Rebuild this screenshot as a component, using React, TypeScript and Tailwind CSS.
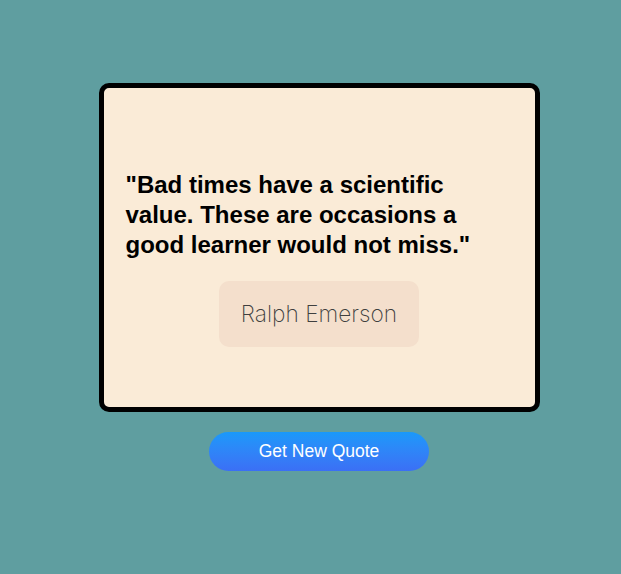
export default function App() {
  return (
    <div className="min-h-[574px] w-full bg-[#5f9ea0] flex flex-col items-center pt-[83px] pl-[17px]">
      <div className="w-[441px] h-[329px] border-[5px] border-black rounded-[10px] bg-[#faebd7] pt-[82px] px-[22px] flex flex-col items-center">
        <p
          className="self-stretch text-[24px] leading-[30px] font-bold text-black"
          style={{ fontFamily: '"Liberation Sans", Arial, sans-serif' }}
        >
          "Bad times have a scientific value. These are occasions a good learner would not miss."
        </p>
        <div className="mt-[21px] w-[200px] h-[66px] rounded-[10px] bg-[#f4dfcc] flex items-center justify-center">
          <span
            className="text-[22.7px] font-extralight text-[#3f3f3f]"
            style={{ fontFamily: 'Inter, sans-serif' }}
          >
            Ralph Emerson
          </span>
        </div>
      </div>
      <button
        className="mt-[20px] w-[220px] h-[39px] rounded-full bg-gradient-to-b from-[#1999fa] to-[#3b6ff5] text-white text-[17.5px]"
        style={{ fontFamily: '"Liberation Sans", Arial, sans-serif' }}
      >
        Get New Quote
      </button>
    </div>
  );
}
